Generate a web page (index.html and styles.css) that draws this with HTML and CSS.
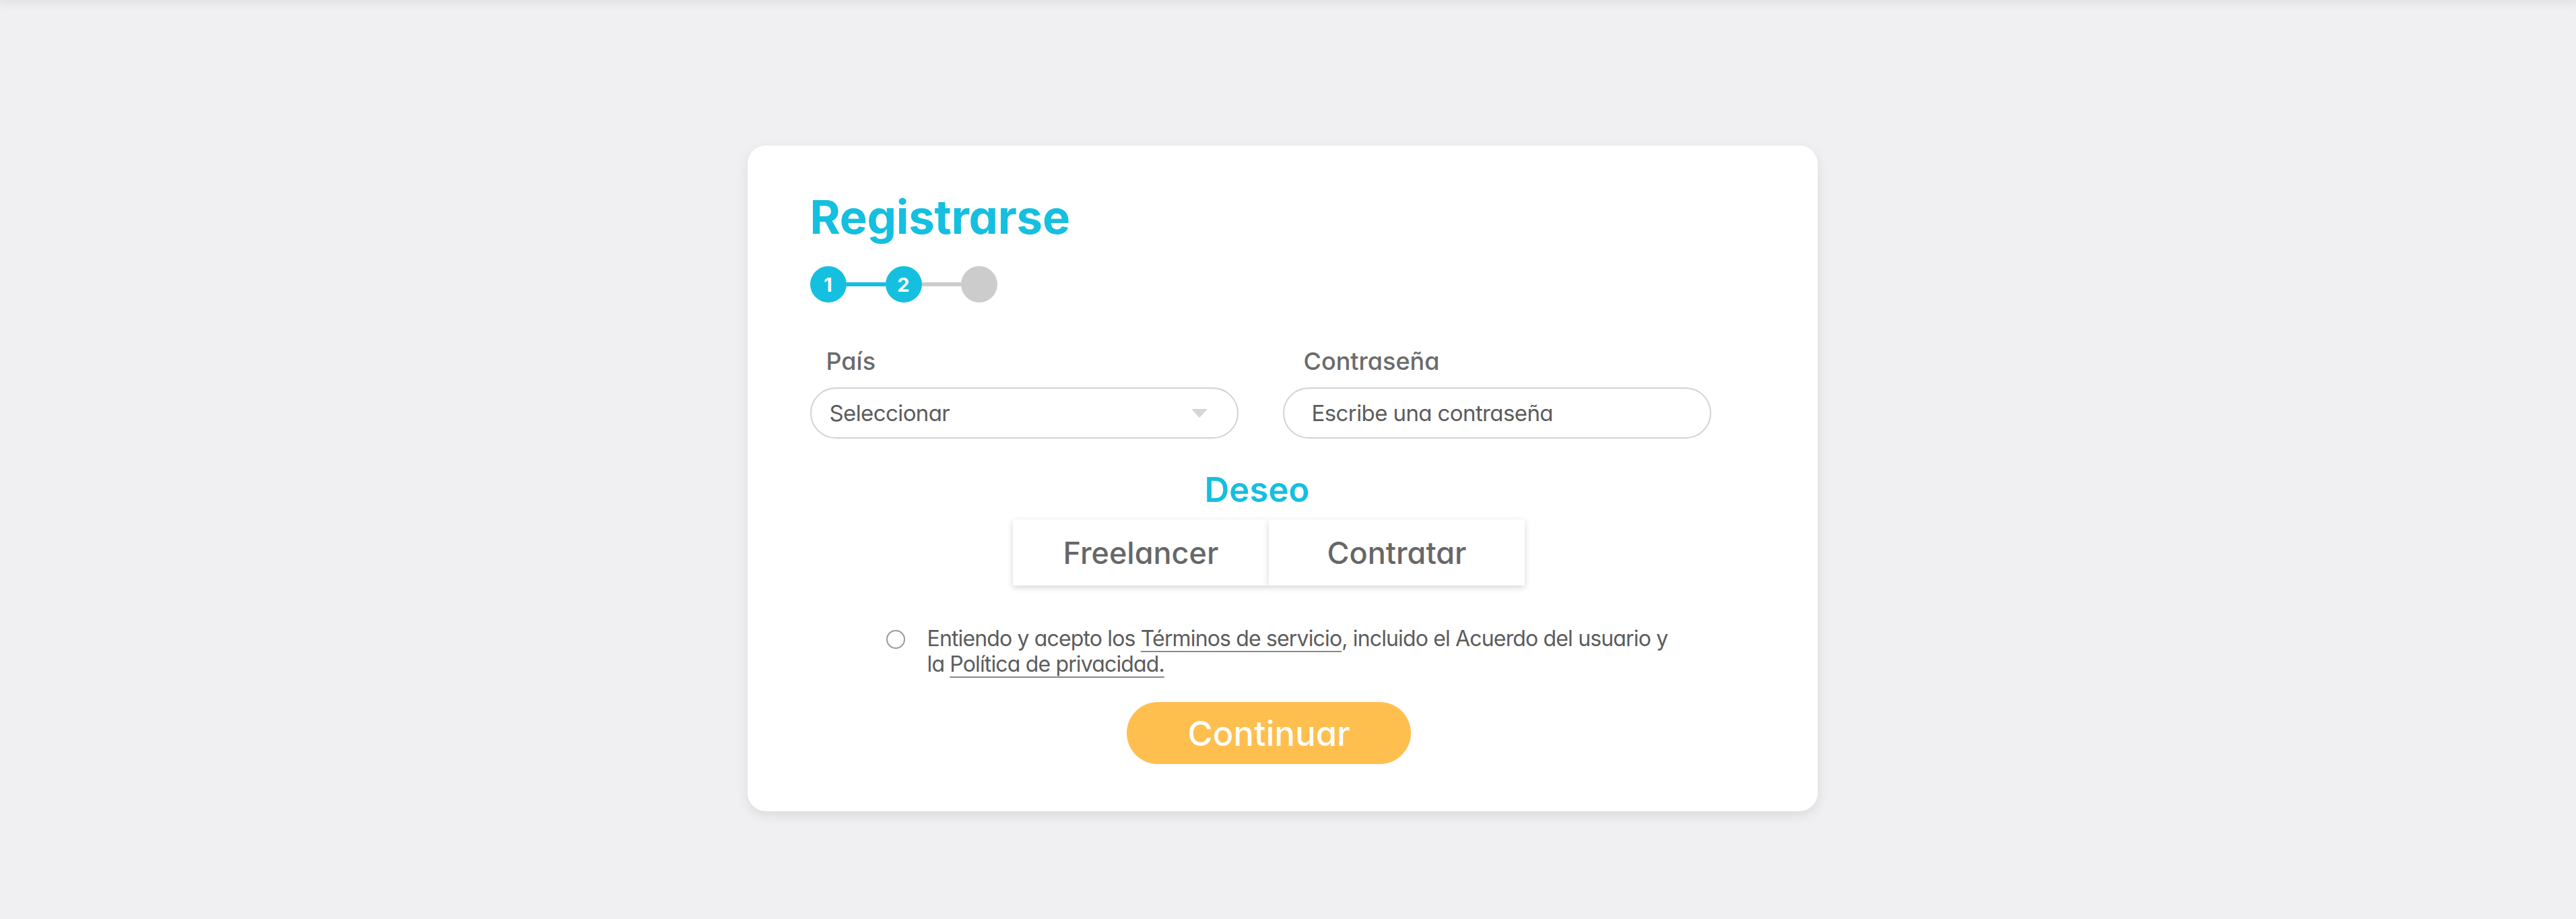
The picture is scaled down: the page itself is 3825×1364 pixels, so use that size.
FILE: index.html
```html
<!DOCTYPE html>
<html lang="es">
<head>
<meta charset="utf-8">
<title>Registrarse</title>
<link rel="stylesheet" href="styles.css">
</head>
<body>
<div class="topbar"></div>
<main class="page">
  <section class="card">
    <h1 class="title">Registrarse</h1>
    <div class="steps">
      <span class="step active">1</span>
      <span class="bar active"></span>
      <span class="step active">2</span>
      <span class="bar"></span>
      <span class="step"></span>
    </div>
    <div class="fields">
      <div class="field">
        <label class="label label-pais">País</label>
        <div class="input select">
          <span class="value">Seleccionar</span>
          <span class="caret"></span>
        </div>
      </div>
      <div class="field">
        <label class="label label-pass">Contraseña</label>
        <div class="input password">
          <span class="value">Escribe una contraseña</span>
        </div>
      </div>
    </div>
    <div class="center">
      <h2 class="deseo">Deseo</h2>
      <div class="toggle">
        <button class="opt">Freelancer</button>
        <button class="opt">Contratar</button>
      </div>
    </div>
    <div class="terms">
      <span class="radio"></span>
      <p class="terms-text">Entiendo y acepto los <a class="link">Términos de servicio</a>, incluido el Acuerdo del usuario y<br>la <a class="link">Política de privacidad.</a></p>
    </div>
    <div class="center">
      <button class="cta">Continuar</button>
    </div>
  </section>
</main>
</body>
</html>
```
FILE: styles.css
```css
html, body {
  margin: 0;
  padding: 0;
}
body {
  background: #f0f0f2;
  min-height: 100vh;
  font-family: "Inter", "Liberation Sans", sans-serif;
  font-feature-settings: "cv11" 1;
  color: #666666;
}
.topbar {
  height: 0;
  box-shadow: 0 0 14px 3px rgba(0, 0, 0, 0.13);
}
.page {
  display: flex;
  justify-content: center;
  padding: 216px 17px 0 0;
}
.card {
  width: 1589px;
  box-sizing: border-box;
  background: #ffffff;
  border-radius: 27px;
  box-shadow: 0 6px 18px rgba(0, 0, 0, 0.09);
  padding: 72px 133px 70px 93px;
}
.title {
  margin: 0;
  font-size: 69px;
  line-height: 1;
  font-weight: 700;
  color: #15bfdf;
  letter-spacing: -0.3px;
}
.steps {
  display: flex;
  align-items: center;
  margin-top: 38px;
}
.step {
  width: 54px;
  height: 54px;
  border-radius: 50%;
  background: #cccccc;
  color: #ffffff;
  font-weight: 700;
  font-size: 29px;
  display: flex;
  align-items: center;
  justify-content: center;
}
.step.active {
  background: #15bfdf;
}
.bar {
  width: 58px;
  height: 6px;
  background: #cccccc;
}
.bar.active {
  background: #15bfdf;
}
.fields {
  display: grid;
  grid-template-columns: 636px 636px;
  column-gap: 66px;
  margin-top: 69px;
}
.label {
  display: block;
  font-size: 36px;
  line-height: 1;
  font-weight: 500;
  color: #6b6b6b;
  margin-bottom: 21px;
}
.label-pais { padding-left: 24px; }
.label-pass { padding-left: 31px; }
.input {
  height: 76px;
  box-sizing: border-box;
  border: 2px solid #d2d2d2;
  border-radius: 38px;
  display: flex;
  align-items: center;
  justify-content: space-between;
}
.select { padding: 0 44px 0 27px; }
.password { padding: 0 30px 0 41px; }
.value {
  font-size: 33px;
  font-weight: 400;
  color: #5c5c5c;
  letter-spacing: -0.6px;
}
.caret {
  width: 0;
  height: 0;
  border-left: 12px solid transparent;
  border-right: 12px solid transparent;
  border-top: 13px solid #d6d6d6;
}
.center {
  display: flex;
  flex-direction: column;
  align-items: center;
}
.deseo {
  margin: 50px 35px 0 0;
  font-size: 51px;
  line-height: 1;
  font-weight: 600;
  color: #15bfdf;
}
.toggle {
  display: flex;
  margin-top: 19px;
}
.opt {
  width: 380px;
  height: 98px;
  border: 0;
  background: #ffffff;
  box-shadow: 0 3px 9px rgba(0, 0, 0, 0.17);
  font-family: inherit;
  font-feature-settings: "cv11" 1;
  font-size: 45px;
  font-weight: 500;
  color: #676767;
  padding: 0;
}
.terms {
  display: flex;
  align-items: flex-start;
  margin: 60px 0 0 113px;
}
.radio {
  flex: none;
  width: 28px;
  height: 28px;
  box-sizing: border-box;
  border: 2px solid #9a9a9a;
  border-radius: 50%;
  margin-top: 6px;
  margin-right: 33px;
}
.terms-text {
  margin: 0;
  font-size: 32px;
  line-height: 38px;
  color: #5c5c5c;
  letter-spacing: -0.85px;
}
.link {
  text-decoration: underline;
  text-decoration-color: #8a8a8a;
  text-decoration-thickness: 2px;
  text-underline-offset: 7px;
}
.cta {
  margin-top: 37px;
  width: 422px;
  height: 92px;
  border: 0;
  border-radius: 46px;
  background: #ffbf4f;
  color: #ffffff;
  font-family: inherit;
  font-feature-settings: "cv11" 1;
  font-size: 51px;
  font-weight: 500;
  padding: 0;
}
```
